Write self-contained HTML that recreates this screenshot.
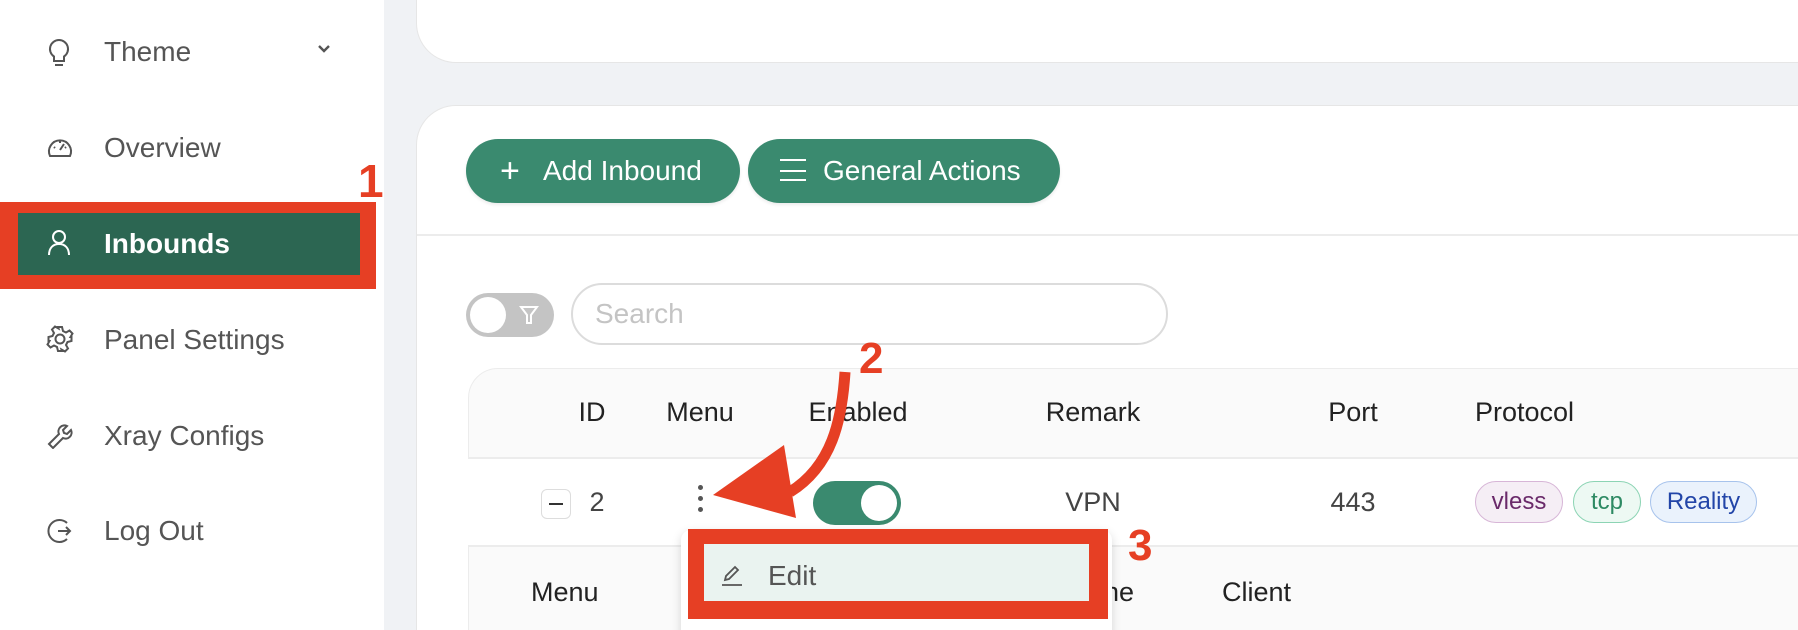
<!DOCTYPE html>
<html style="width:1798px;height:630px;overflow:hidden"><head><meta charset="utf-8"><style>
*{box-sizing:border-box;margin:0;padding:0}
body{width:1798px;height:630px;overflow:hidden;background:#f0f2f5;font-family:"Liberation Sans",sans-serif;position:relative;color:#333}
.abs{position:absolute}
.side{left:0;top:0;width:384px;height:630px;background:#fff}
.nav{position:absolute;left:104px;font-size:28px;color:#555;line-height:30px}
.ico{position:absolute;left:46px}
.card1{left:416px;top:-40px;width:1420px;height:103px;background:#fff;border-radius:40px;border:1px solid #e6e6e6}
.card2{left:416px;top:105px;width:1420px;height:525px;background:#fff;border-radius:40px 0 0 0;border:1px solid #e6e6e6;border-bottom:none}
.btn{position:absolute;top:139px;height:64px;background:#3a8a6f;border-radius:32px;color:#fff;font-size:28px;line-height:64px;box-shadow:0 2px 3px rgba(0,0,0,.08)}
.th{position:absolute;top:397px;font-size:27px;color:#222;transform:translateX(-50%)}
.td{position:absolute;top:487px;font-size:27px;color:#444;transform:translateX(-50%)}
.tag{position:absolute;top:481px;height:42px;border-radius:21px;font-size:24px;line-height:40px;text-align:center}
</style></head><body>
<div class="abs side"></div>
<svg class="ico" style="top:38px" width="26" height="30" viewBox="0 0 26 30" fill="none" stroke="#555" stroke-width="2"><path d="M13 2a9 9 0 0 0-5 16.5V23h10v-4.5A9 9 0 0 0 13 2z"/><path d="M9 27h8"/></svg>
<div class="nav" style="top:37px">Theme</div>
<svg class="abs" style="left:317px;top:44px" width="14" height="10" viewBox="0 0 14 10" fill="none" stroke="#555" stroke-width="2.4"><path d="M2 2l5 5 5-5"/></svg>
<svg class="ico" style="top:134px" width="28" height="28" viewBox="0 0 28 28" fill="none" stroke="#555" stroke-width="2"><path d="M4 22a11 11 0 1 1 20 0z"/><path d="M14 16l4-6M8 13l1 1M14 7v2M20 13l-1 1"/></svg>
<div class="nav" style="top:133px">Overview</div>
<div class="abs" style="left:0;top:202px;width:376px;height:87px;background:#e63f24"></div>
<div class="abs" style="left:18px;top:213px;width:342px;height:62px;background:#2c6652"></div>
<svg class="ico" style="top:229px" width="26" height="28" viewBox="0 0 26 28" fill="none" stroke="#fff" stroke-width="2"><circle cx="13" cy="8" r="6"/><path d="M3 26c0-7 4-11 10-11s10 4 10 11"/></svg>
<div class="nav" style="top:229px;color:#fff;font-weight:bold">Inbounds</div>
<div class="abs" style="left:358px;top:154px;font-size:46px;font-weight:bold;color:#e63f24">1</div>
<svg class="ico" style="top:325px" width="28" height="28" viewBox="0 0 28 28" fill="none" stroke="#555" stroke-width="2"><circle cx="14" cy="14" r="4.5"/><path d="M12 2h4l1 4 3 1.5 3.5-2 3 3-2 3.5L25.5 12l0 4-4 1-1.5 3 2 3.5-3 3-3.5-2L16 26l-4 0-1-4-3-1.5-3.5 2-3-3 2-3.5L2.5 16v-4l4-1L8 8 6 4.5l3-3 3.5 2z"/></svg>
<div class="nav" style="top:325px">Panel Settings</div>
<svg class="ico" style="top:421px" width="28" height="28" viewBox="0 0 28 28" fill="none" stroke="#555" stroke-width="2"><path d="M3 23l10-10a6 6 0 0 1 8-8l-4 4 1 3 3 1 4-4a6 6 0 0 1-8 8L7 27z"/></svg>
<div class="nav" style="top:421px">Xray Configs</div>
<svg class="ico" style="top:517px" width="28" height="28" viewBox="0 0 28 28" fill="none" stroke="#555" stroke-width="2"><path d="M21 6A11 11 0 1 0 21 22"/><path d="M12 14h12M20 10l4 4-4 4"/></svg>
<div class="nav" style="top:516px">Log Out</div>
<div class="abs card1"></div>
<div class="abs card2"></div>
<div class="btn" style="left:466px;width:274px"><span style="position:absolute;left:34px;font-size:34px;font-weight:300">+</span><span style="position:absolute;left:77px">Add Inbound</span></div>
<div class="btn" style="left:748px;width:312px"><span style="position:absolute;left:32px;top:20px;width:26px;height:22px;border-top:2px solid #fff;border-bottom:2px solid #fff"></span><span style="position:absolute;left:32px;top:31px;width:26px;height:2px;background:#fff"></span><span style="position:absolute;left:75px">General Actions</span></div>
<div class="abs" style="left:417px;top:234px;width:1381px;height:2px;background:#ececec"></div>
<div class="abs" style="left:466px;top:293px;width:88px;height:44px;border-radius:22px;background:#c4c4c4"></div>
<div class="abs" style="left:470px;top:297px;width:36px;height:36px;border-radius:50%;background:#fff"></div>
<svg class="abs" style="left:518px;top:304px" width="22" height="22" viewBox="0 0 22 22" fill="none" stroke="#fff" stroke-width="2"><path d="M3 3h16l-6 8v8h-4v-8z"/></svg>
<div class="abs" style="left:571px;top:283px;width:597px;height:62px;border:2px solid #dcdcdc;border-radius:31px;font-size:28px;color:#c4c4c4;padding:13px 22px">Search</div>
<div class="abs" style="left:468px;top:368px;width:1340px;height:270px;background:#fafafa;border-radius:30px 0 0 0;border:1px solid #ececec"></div>
<div class="abs" style="left:468px;top:457px;width:1340px;height:90px;background:#fff;border-top:2px solid #ececec;border-bottom:2px solid #ececec"></div>
<div class="th" style="left:592px">ID</div>
<div class="th" style="left:700px">Menu</div>
<div class="th" style="left:858px">Enabled</div>
<div class="th" style="left:1093px">Remark</div>
<div class="th" style="left:1353px">Port</div>
<div class="th" style="left:1475px;transform:none">Protocol</div>
<div class="abs" style="left:541px;top:489px;width:30px;height:30px;border:1px solid #ddd;border-radius:6px"><div style="margin:13px 7px;height:2px;background:#333"></div></div>
<div class="td" style="left:597px">2</div>
<div class="abs" style="left:698px;top:485px;width:5px;height:5px;border-radius:50%;background:#555;box-shadow:0 11px 0 #555,0 22px 0 #555"></div>
<div class="abs" style="left:813px;top:481px;width:88px;height:44px;border-radius:22px;background:#3a8a6f"></div>
<div class="abs" style="left:861px;top:485px;width:36px;height:36px;border-radius:50%;background:#fff"></div>
<div class="td" style="left:1093px">VPN</div>
<div class="td" style="left:1353px">443</div>
<div class="tag" style="left:1475px;width:88px;background:#f5eef5;border:1px solid #d7b6d7;color:#6a2a6a">vless</div>
<div class="tag" style="left:1573px;width:68px;background:#edf9f3;border:1px solid #8cd4b4;color:#2d8a63">tcp</div>
<div class="tag" style="left:1650px;width:107px;background:#eaf2fc;border:1px solid #a7c3ec;color:#2245a8">Reality</div>
<div class="abs" style="left:531px;top:577px;font-size:27px;color:#222">Menu</div>
<div class="abs" style="left:1104px;top:577px;font-size:27px;color:#222">ne</div>
<div class="abs" style="left:1222px;top:577px;font-size:27px;color:#222">Client</div>
<div class="abs" style="left:681px;top:530px;width:431px;height:120px;background:#fff;border-radius:10px;box-shadow:0 3px 10px rgba(0,0,0,.15)"></div>
<div class="abs" style="left:688px;top:529px;width:420px;height:90px;background:#e63f24"></div>
<div class="abs" style="left:704px;top:544px;width:385px;height:57px;background:#eaf3f0"></div>
<svg class="abs" style="left:720px;top:563px" width="24" height="24" viewBox="0 0 24 24" fill="none" stroke="#555" stroke-width="1.8"><path d="M5 17l1-4 9-9 3 3-9 9z"/><path d="M2 22h20"/></svg>
<div class="abs" style="left:768px;top:560px;font-size:28px;color:#555">Edit</div>
<div class="abs" style="left:1128px;top:521px;font-size:44px;font-weight:bold;color:#e63f24">3</div>
<div class="abs" style="left:859px;top:334px;font-size:44px;font-weight:bold;color:#e63f24">2</div>
<svg class="abs" style="left:0;top:0" width="1798" height="630"><path d="M845 372C842 420 832 466 790 492" fill="none" stroke="#e63f24" stroke-width="11"/><path d="M713 495L784 445L796 518z" fill="#e63f24"/></svg>
</body></html>
